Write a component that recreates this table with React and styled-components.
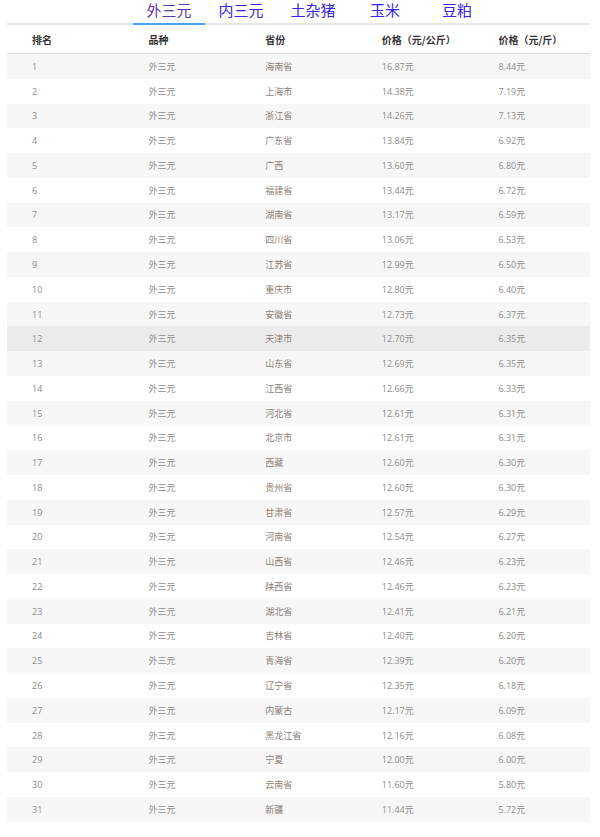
import styled, { createGlobalStyle } from 'styled-components';

const GlobalStyle = createGlobalStyle`
  html, body {
    margin: 0;
    padding: 0;
    background: #fff;
    font-family: "Open Sans", "Noto Sans CJK SC", sans-serif;
  }
`;

const tabs = ['外三元', '内三元', '土杂猪', '玉米', '豆粕'];

// 名次, 省份, 元/公斤, 元/斤
const rows = [
  ['海南省', '16.87', '8.44'],
  ['上海市', '14.38', '7.19'],
  ['浙江省', '14.26', '7.13'],
  ['广东省', '13.84', '6.92'],
  ['广西', '13.60', '6.80'],
  ['福建省', '13.44', '6.72'],
  ['湖南省', '13.17', '6.59'],
  ['四川省', '13.06', '6.53'],
  ['江苏省', '12.99', '6.50'],
  ['重庆市', '12.80', '6.40'],
  ['安徽省', '12.73', '6.37'],
  ['天津市', '12.70', '6.35'],
  ['山东省', '12.69', '6.35'],
  ['江西省', '12.66', '6.33'],
  ['河北省', '12.61', '6.31'],
  ['北京市', '12.61', '6.31'],
  ['西藏', '12.60', '6.30'],
  ['贵州省', '12.60', '6.30'],
  ['甘肃省', '12.57', '6.29'],
  ['河南省', '12.54', '6.27'],
  ['山西省', '12.46', '6.23'],
  ['陕西省', '12.46', '6.23'],
  ['湖北省', '12.41', '6.21'],
  ['吉林省', '12.40', '6.20'],
  ['青海省', '12.39', '6.20'],
  ['辽宁省', '12.35', '6.18'],
  ['内蒙古', '12.17', '6.09'],
  ['黑龙江省', '12.16', '6.08'],
  ['宁夏', '12.00', '6.00'],
  ['云南省', '11.60', '5.80'],
  ['新疆', '11.44', '5.72'],
];

const App = () => {
  return (
    <>
      <GlobalStyle />
      <Page>
        <TabBar>
          {tabs.map((t, i) => (
            <Tab key={t} active={i === 0}>{t}</Tab>
          ))}
        </TabBar>

        <Table>
          <HeadRow>
            <HeadCell>排名</HeadCell>
            <HeadCell>品种</HeadCell>
            <HeadCell>省份</HeadCell>
            <HeadCell>价格（元/公斤）</HeadCell>
            <HeadCell>价格（元/斤）</HeadCell>
          </HeadRow>
          {rows.map((r, i) => (
            <Row key={r[0]} striped={i % 2 === 0} hover={i === 11}>
              <Cell>{i + 1}</Cell>
              <Cell>外三元</Cell>
              <Cell province>{r[0]}</Cell>
              <Cell>{r[1]}元</Cell>
              <Cell>{r[2]}元</Cell>
            </Row>
          ))}
        </Table>
      </Page>
    </>
  );
};

const Page = styled.div`
  padding: 0 10px 14px 7px;
`;

const TabBar = styled.div`
  display: flex;
  padding-left: 126px;
  border-bottom: 2px solid #e6e6e6;
  height: 23px;
`;

const Tab = styled.div`
  width: 72px;
  height: 23px;
  margin-bottom: -2px;
  text-align: center;
  font-family: "Noto Sans CJK SC", sans-serif;
  font-size: 15px;
  line-height: 20px;
  color: ${props => props.active ? '#5b3aa6' : '#3526e8'};
  border-bottom: 2px solid ${props => props.active ? '#4aa3f0' : 'transparent'};
`;

const Table = styled.div`
  display: flex;
  flex-direction: column;
`;

const HeadRow = styled.div`
  display: grid;
  grid-template-columns: repeat(5, 1fr);
  height: 28px;
  align-items: center;
  border-bottom: 1px solid #dcdcdc;
`;

const HeadCell = styled.div`
  padding-left: 25px;
  font-family: "Noto Sans CJK SC", sans-serif;
  font-size: 10px;
  font-weight: 700;
  color: #333;
`;

const Row = styled.div`
  display: grid;
  grid-template-columns: repeat(5, 1fr);
  height: 24.77px;
  align-items: center;
  background: ${props => props.hover ? '#ececec' : props.striped ? '#f7f7f7' : '#fff'};
`;

const Cell = styled.div`
  padding-left: 25px;
  font-size: 9px;
  color: ${props => props.province ? '#8a7e76' : '#8c8c8c'};
`;

export default App;
